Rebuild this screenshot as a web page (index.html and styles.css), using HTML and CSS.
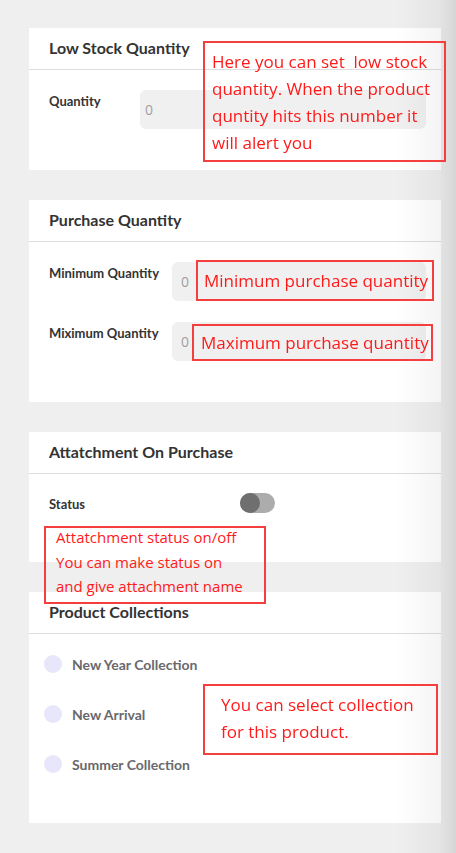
FILE: index.html
```html
<!DOCTYPE html>
<html lang="en">
<head>
    <meta charset="UTF-8">
    <meta name="viewport" content="width=device-width, initial-scale=1.0">
    <title>Product Inventory Settings</title>
    <link rel="stylesheet" href="styles.css">
</head>
<body>
    <div class="page">
        <div class="card">
            <h3 class="card-title">Low Stock Quantity</h3>
            <div class="card-body">
                <div class="field field-short">
                    <label for="lowStock">Quantity</label>
                    <input type="text" id="lowStock" placeholder="0">
                </div>
            </div>
            <div class="note note-low">Here you can set&nbsp; low stock quantity. When the product quntity hits this number it will alert you</div>
        </div>

        <div class="card">
            <h3 class="card-title">Purchase Quantity</h3>
            <div class="card-body rows">
                <div class="field field-long">
                    <label for="minQty">Minimum Quantity</label>
                    <input type="text" id="minQty" placeholder="0">
                </div>
                <div class="field field-long">
                    <label for="maxQty">Miximum Quantity</label>
                    <input type="text" id="maxQty" placeholder="0">
                </div>
            </div>
            <div class="note note-min">Minimum purchase quantity</div>
            <div class="note note-max">Maximum purchase quantity</div>
        </div>

        <div class="card">
            <h3 class="card-title">Attatchment On Purchase</h3>
            <div class="card-body body-status">
                <div class="field field-status">
                    <label>Status</label>
                    <span class="toggle"><span class="knob"></span></span>
                </div>
            </div>
            <div class="note note-status"><p>Attatchment status on/off<br>You can make status on<br>and give attachment name</p></div>
        </div>

        <div class="card">
            <h3 class="card-title">Product Collections</h3>
            <div class="card-body collections">
                <div class="collection"><span class="radio"></span>New Year Collection</div>
                <div class="collection"><span class="radio"></span>New Arrival</div>
                <div class="collection"><span class="radio"></span>Summer Collection</div>
            </div>
            <div class="note note-collection">You can select collection for this product.</div>
        </div>
    </div>
    <div class="edge-shade"></div>
</body>
</html>
```

FILE: styles.css
```css
body {
    margin: 0;
    padding: 0;
    background: #efefef;
    font-family: Lato, "Open Sans", sans-serif;
    color: #333;
}

.page {
    padding: 28px 15px 30px 29px;
    display: flex;
    flex-direction: column;
    gap: 30px;
}

.card {
    position: relative;
    width: 412px;
    background: #fff;
}

.card-title {
    margin: 0;
    height: 41px;
    padding-left: 20px;
    line-height: 40px;
    font-size: 16px;
    font-weight: 700;
    color: #333;
    border-bottom: 1px solid #dedede;
}

.card-body {
    padding: 20px 15px 41px 20px;
}

.rows {
    display: flex;
    flex-direction: column;
    gap: 21px;
    padding-bottom: 41px;
}

.field {
    display: flex;
    align-items: flex-start;
}

.field label {
    flex: none;
    padding-top: 3px;
    font-size: 13px;
    font-weight: 700;
    color: #333;
}

.field-short label {
    width: 91px;
}

.field-long label {
    width: 123px;
}

.field input {
    flex: 1;
    min-width: 0;
    height: 39px;
    box-sizing: border-box;
    border: none;
    border-radius: 6px;
    background: #f0f0f0;
    padding: 0 5px;
    font-family: "Open Sans", sans-serif;
    font-size: 14px;
}

.field-long input {
    padding-left: 9px;
}

.field input::placeholder {
    color: #a0a0a0;
}

.body-status {
    padding-top: 19px;
    padding-bottom: 49px;
}

.field-status {
    align-items: center;
}

.field-status label {
    width: 191px;
    padding-top: 1px;
}

.toggle {
    display: block;
    position: relative;
    width: 35px;
    height: 20px;
    border-radius: 10px;
    background: #acacac;
}

.knob {
    position: absolute;
    left: 0;
    top: 0;
    width: 20px;
    height: 20px;
    border-radius: 50%;
    background: #6f6f6f;
}

.collections {
    padding: 20px 15px 49px 15px;
    display: flex;
    flex-direction: column;
    gap: 30px;
}

.collection {
    display: flex;
    align-items: center;
    gap: 10px;
    height: 20px;
    font-size: 14px;
    font-weight: 700;
    color: #69696d;
}

.radio {
    width: 18px;
    height: 18px;
    border-radius: 50%;
    background: #e7e6fb;
}

/* red help annotations laid over the form */
.note {
    position: absolute;
    z-index: 1;
    box-sizing: border-box;
    border: 2px solid #f43f3f;
    color: #ff1a1a;
    font-family: "Open Sans", sans-serif;
}

.note-low {
    top: 13px;
    left: 174px;
    width: 243px;
    height: 121px;
    padding: 5px 4px 0 7px;
    font-size: 17px;
    line-height: 27px;
}

.note-min {
    top: 60px;
    left: 167px;
    width: 238px;
    height: 41px;
    padding: 0 0 0 6px;
    font-size: 17px;
    line-height: 37px;
}

.note-max {
    top: 124px;
    left: 163px;
    width: 241px;
    height: 37px;
    padding: 0 0 0 7px;
    font-size: 17px;
    line-height: 33px;
}

.note-status {
    top: 94px;
    left: 15px;
    width: 222px;
    height: 78px;
    padding: 0 0 0 10px;
    font-size: 15px;
    line-height: 24.5px;
}

.note-status p {
    margin: -3px 0 0;
}

.note-collection {
    top: 92px;
    left: 174px;
    width: 235px;
    height: 71px;
    padding: 5px 10px 0 16px;
    font-size: 17px;
    line-height: 27px;
}

.edge-shade {
    position: fixed;
    top: 0;
    right: 0;
    width: 60px;
    height: 100%;
    pointer-events: none;
    background: linear-gradient(to right, rgba(0, 0, 0, 0), rgba(0, 0, 0, 0.04) 70%, rgba(0, 0, 0, 0.1));
}
```
